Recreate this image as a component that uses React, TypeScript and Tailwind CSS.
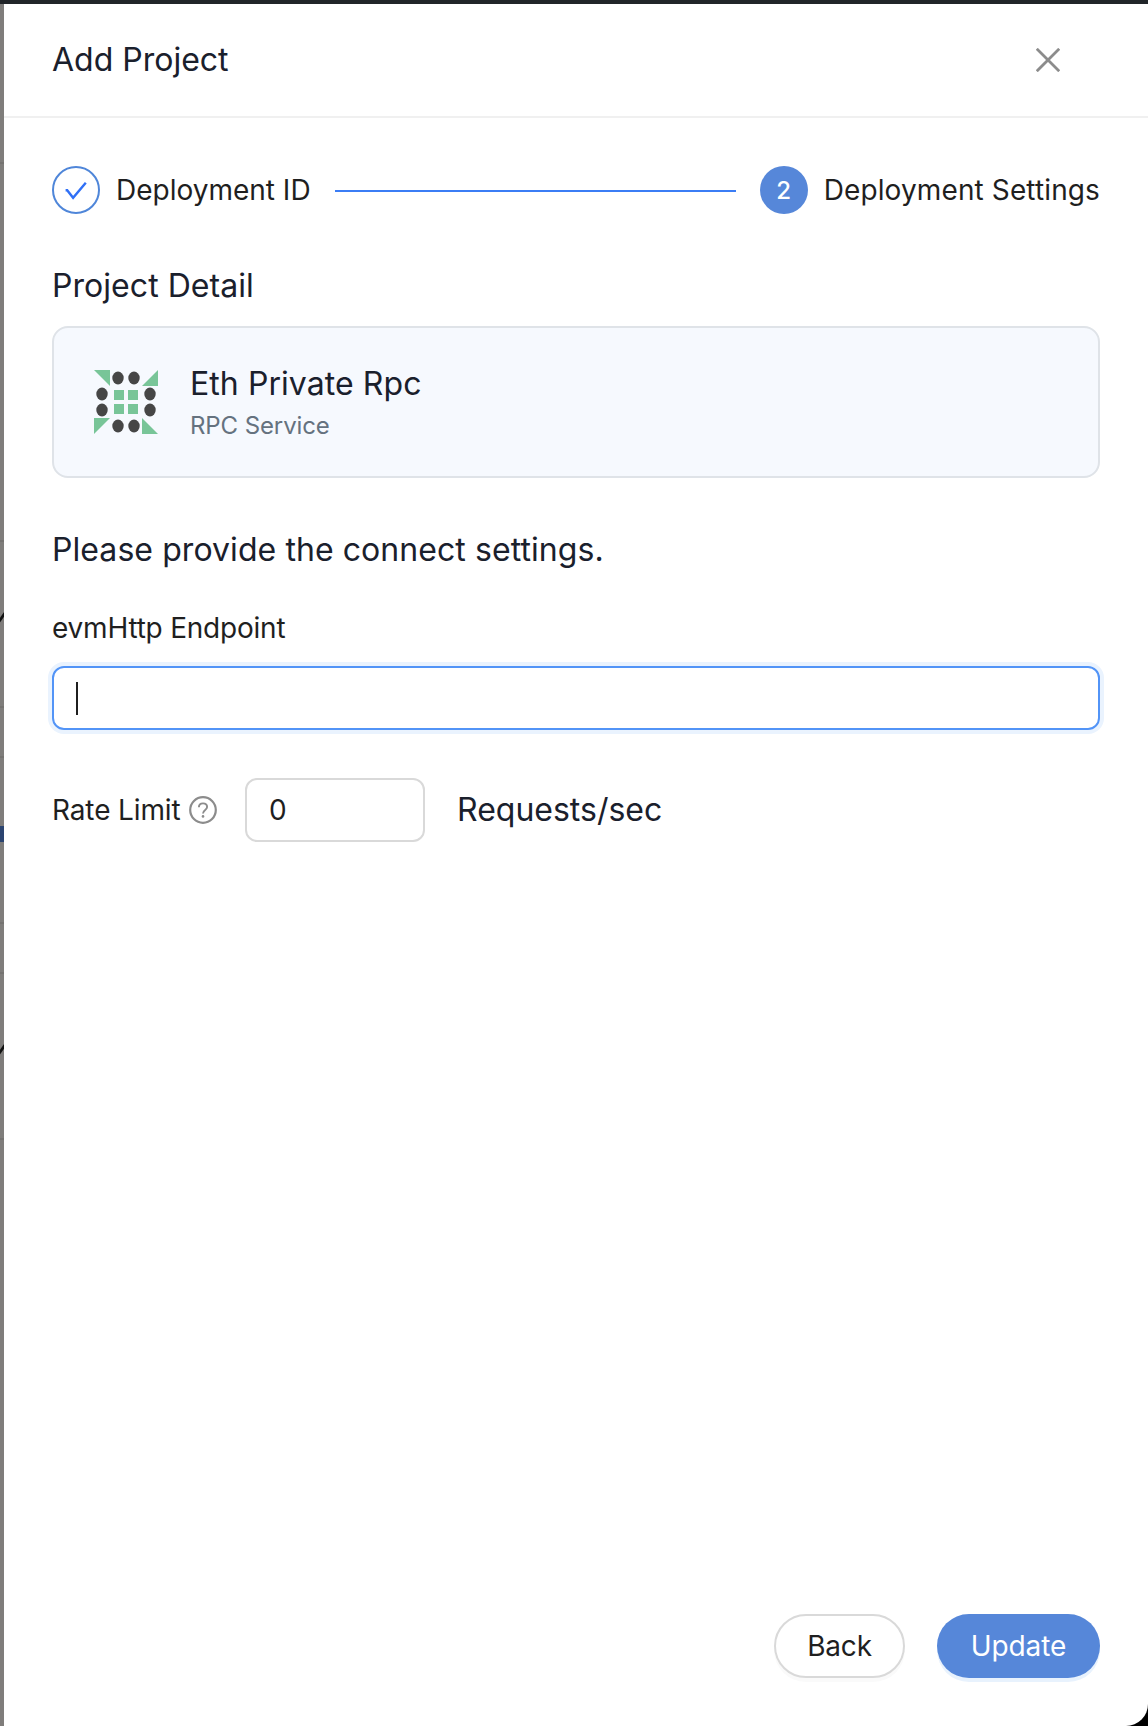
import React from "react";

// Sliver of the dimmed page that stays visible beside the drawer.
function Backdrop() {
  return (
    <div className="flex w-1 shrink-0 flex-col overflow-hidden bg-[#7f7d7b]">
      <div className="mt-[158px] h-0.5 shrink-0 bg-[#757371]" />
      <div className="mt-[376px] h-0.5 shrink-0 bg-[#757371]" />
      <svg className="mt-[69px] h-3 w-1 shrink-0" viewBox="0 0 4 12">
        <path d="M-1 10.5L5 2" stroke="#111" strokeWidth="2.8" />
      </svg>
      <div className="mt-[83px] h-0.5 shrink-0 bg-[#757371]" />
      <div className="mt-12 h-0.5 shrink-0 bg-[#757371]" />
      <div className="mt-[68px] h-4 shrink-0 bg-[#2b4470]" />
      <div className="mt-20 h-0.5 shrink-0 bg-[#757371]" />
      <div className="mt-12 h-0.5 shrink-0 bg-[#757371]" />
      <svg className="mt-[69px] h-3 w-1 shrink-0" viewBox="0 0 4 12">
        <path d="M-1 10.5L5 2" stroke="#111" strokeWidth="2.8" />
      </svg>
      <div className="mt-[83px] h-0.5 shrink-0 bg-[#757371]" />
    </div>
  );
}

function ProjectIcon() {
  const dots = [
    [24, 8], [40, 8], [8, 24], [56, 24], [8, 40], [56, 40], [24, 56], [40, 56],
  ];
  return (
    <svg className="size-16 shrink-0" viewBox="0 0 64 64">
      <g fill="#78c598">
        <path d="M0 0H16V16Z" />
        <path d="M64 0V16H48Z" />
        <path d="M0 48H16L0 64Z" />
        <path d="M48 48L64 64H48Z" />
        <path d="M20 20h10v10H20zM34 20h10v10H34zM20 34h10v10H20zM34 34h10v10H34z" />
      </g>
      {dots.map(([x, y]) => (
        <ellipse key={`${x}-${y}`} cx={x} cy={y} rx="5.7" ry="6.4" fill="#464646" />
      ))}
    </svg>
  );
}

export default function App() {
  return (
    <div className="flex h-[1726px] w-[1148px] flex-col overflow-hidden bg-black font-['Inter',sans-serif] text-[28px] leading-[44px] text-[#1f1f1f]">
      <div className="h-1 shrink-0 bg-[#212529]" />
      <div className="flex min-h-0 flex-1">
        <Backdrop />
        <main className="flex min-w-0 flex-1 flex-col rounded-br-[22px] bg-white">
          <header className="flex h-[114px] shrink-0 items-center justify-between border-b-2 border-[#f0f0f0] pr-[88px] pl-12">
            <h1 className="text-[32px] leading-12 text-[#1a202c]">Add Project</h1>
            <button aria-label="Close">
              <svg className="block size-6" viewBox="0 0 24 24" fill="none" stroke="#8c8c8c" strokeWidth="2.8">
                <path d="M0.8 0.8L23.2 23.2M23.2 0.8L0.8 23.2" />
              </svg>
            </button>
          </header>

          <div className="flex flex-1 flex-col px-12 pt-12 pb-12">
            <div className="flex h-12 items-center">
              <div className="flex size-12 shrink-0 items-center justify-center rounded-full border-2 border-[#4f86d9]">
                <svg className="h-[18px] w-[22px] translate-y-px" viewBox="0 0 22 18" fill="none" stroke="#3070f6" strokeWidth="2.4">
                  <path d="M0.6 8.2H2.2L8.1 15.8L20.8 0.8" />
                </svg>
              </div>
              <span className="ml-4 whitespace-nowrap">Deployment ID</span>
              <div className="mr-6 ml-6 h-0.5 flex-1 translate-y-px bg-[#3b7df5]" />
              <div className="flex size-12 shrink-0 items-center justify-center rounded-full bg-[#5687d9] pt-0.5 text-2xl font-medium text-white">2</div>
              <span className="ml-4 whitespace-nowrap tracking-[0.12px]">Deployment Settings</span>
            </div>

            <h2 className="mt-12 text-[32px] leading-12 tracking-[0.05px] text-[#1a202c]">Project Detail</h2>
            <section className="mt-4 flex h-[152px] shrink-0 items-center rounded-2xl border-2 border-[#dfe3e8] bg-[#f6f9fe] pl-10">
              <ProjectIcon />
              <div className="ml-8">
                <p className="text-[32px] leading-12 tracking-[0.07px] text-[#1a202c]">Eth Private Rpc</p>
                <p className="text-2xl leading-9 tracking-[-0.1px] text-[#65727f]">RPC Service</p>
              </div>
            </section>

            <p className="mt-12 text-[32px] leading-12 tracking-[0.07px] text-[#1a202c]">Please provide the connect settings.</p>
            <label className="mt-8 tracking-[-0.22px]">evmHttp Endpoint</label>
            <div className="mt-4 flex h-16 shrink-0 items-center rounded-xl border-2 border-[#5294f7] pl-[22px] shadow-[0_0_0_4px_#eaf3fe]">
              <span className="h-[33px] w-0.5 bg-[#1f1f1f]" />
            </div>

            <div className="mt-12 flex h-16 items-center">
              <span className="w-[129px] whitespace-nowrap tracking-[-0.12px]">Rate Limit</span>
              <svg className="ml-2 size-7 shrink-0" viewBox="0 0 28 28" fill="none" stroke="#8c8c8c" strokeWidth="2.2">
                <circle cx="14" cy="14" r="12.8" />
                <path d="M9.9 11.3C9.9 8.9 11.7 7.4 14 7.4S18.1 8.9 18.1 11.1C18.1 14 14 14 14 17.5" strokeWidth="1.9" />
                <circle cx="14" cy="20.4" r="1.3" fill="#8c8c8c" stroke="none" />
              </svg>
              <div className="ml-7 flex h-16 w-[180px] shrink-0 items-center rounded-xl border-2 border-[#d9d9d9] pl-[22px]">0</div>
              <span className="ml-8 text-[32px] leading-12 text-[#1a202c]">Requests/sec</span>
            </div>

            <div className="mt-auto flex justify-end gap-8">
              <button className="h-16 w-[131px] rounded-full border-2 border-[#d9d9d9] bg-white tracking-[-0.2px] shadow-[0_4px_0_#fafafa]">Back</button>
              <button className="h-16 w-[163px] rounded-full bg-[#5687d9] tracking-[-0.1px] text-white shadow-[0_4px_0_#e8f2fd]">Update</button>
            </div>
          </div>
        </main>
      </div>
    </div>
  );
}
